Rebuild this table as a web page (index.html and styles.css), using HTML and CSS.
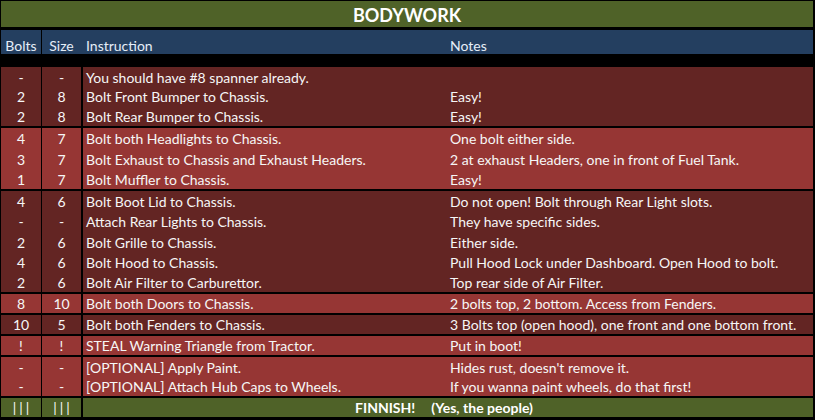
FILE: index.html
```html
<!DOCTYPE html>
<html>
<head>
<meta charset="utf-8">
<link rel="stylesheet" href="styles.css">
</head>
<body>
<div class="sheet">
  <div class="title">BODYWORK</div>
  <div class="head">
    <div class="c-bolts">Bolts</div>
    <div class="c-size">Size</div>
    <div class="c-instr">Instruction</div>
    <div class="c-notes">Notes</div>
  </div>
  <div class="spacer"></div>

  <div class="grp dark g1">
    <div class="row"><div class="c-bolts">-</div><div class="c-size">-</div><div class="c-instr">You should have #8 spanner already.</div><div class="c-notes"></div></div>
    <div class="row"><div class="c-bolts">2</div><div class="c-size">8</div><div class="c-instr">Bolt Front Bumper to Chassis.</div><div class="c-notes">Easy!</div></div>
    <div class="row"><div class="c-bolts">2</div><div class="c-size">8</div><div class="c-instr">Bolt Rear Bumper to Chassis.</div><div class="c-notes">Easy!</div></div>
  </div>

  <div class="grp light g2">
    <div class="row"><div class="c-bolts">4</div><div class="c-size">7</div><div class="c-instr">Bolt both Headlights to Chassis.</div><div class="c-notes">One bolt either side.</div></div>
    <div class="row"><div class="c-bolts">3</div><div class="c-size">7</div><div class="c-instr">Bolt Exhaust to Chassis and Exhaust Headers.</div><div class="c-notes">2 at exhaust Headers, one in front of Fuel Tank.</div></div>
    <div class="row"><div class="c-bolts">1</div><div class="c-size">7</div><div class="c-instr">Bolt Muffler to Chassis.</div><div class="c-notes">Easy!</div></div>
  </div>

  <div class="grp dark g3">
    <div class="row"><div class="c-bolts">4</div><div class="c-size">6</div><div class="c-instr">Bolt Boot Lid to Chassis.</div><div class="c-notes">Do not open! Bolt through Rear Light slots.</div></div>
    <div class="row"><div class="c-bolts">-</div><div class="c-size">-</div><div class="c-instr">Attach Rear Lights to Chassis.</div><div class="c-notes">They have specific sides.</div></div>
    <div class="row"><div class="c-bolts">2</div><div class="c-size">6</div><div class="c-instr">Bolt Grille to Chassis.</div><div class="c-notes">Either side.</div></div>
    <div class="row"><div class="c-bolts">4</div><div class="c-size">6</div><div class="c-instr">Bolt Hood to Chassis.</div><div class="c-notes">Pull Hood Lock under Dashboard. Open Hood to bolt.</div></div>
    <div class="row"><div class="c-bolts">2</div><div class="c-size">6</div><div class="c-instr">Bolt Air Filter to Carburettor.</div><div class="c-notes">Top rear side of Air Filter.</div></div>
  </div>

  <div class="grp light g1row">
    <div class="row"><div class="c-bolts">8</div><div class="c-size">10</div><div class="c-instr">Bolt both Doors to Chassis.</div><div class="c-notes">2 bolts top, 2 bottom. Access from Fenders.</div></div>
  </div>

  <div class="grp dark g1row">
    <div class="row"><div class="c-bolts">10</div><div class="c-size">5</div><div class="c-instr">Bolt both Fenders to Chassis.</div><div class="c-notes">3 Bolts top (open hood), one front and one bottom front.</div></div>
  </div>

  <div class="grp light g1row">
    <div class="row"><div class="c-bolts">!</div><div class="c-size">!</div><div class="c-instr">STEAL Warning Triangle from Tractor.</div><div class="c-notes">Put in boot!</div></div>
  </div>

  <div class="grp light g2row">
    <div class="row"><div class="c-bolts">-</div><div class="c-size">-</div><div class="c-instr">[OPTIONAL] Apply Paint.</div><div class="c-notes">Hides rust, doesn't remove it.</div></div>
    <div class="row"><div class="c-bolts">-</div><div class="c-size">-</div><div class="c-instr">[OPTIONAL] Attach Hub Caps to Wheels.</div><div class="c-notes">If you wanna paint wheels, do that first!</div></div>
  </div>

  <div class="grp green g1row">
    <div class="row foot"><div class="c-bolts pipes">|||</div><div class="c-size pipes">|||</div><div class="c-merged"><span>FINNISH!</span><span class="sub">(Yes, the people)</span></div></div>
  </div>
</div>
</body>
</html>
```
FILE: styles.css
```css
html, body {
  margin: 0;
  padding: 0;
  background: #000;
}

.sheet {
  width: 815px;
  height: 420px;
  box-sizing: border-box;
  padding: 1px 2px 2px 1px;
  background: #000;
  font-family: Lato, "Liberation Sans", sans-serif;
  font-size: 14px;
  color: #f6f6f6;
  display: flex;
  flex-direction: column;
}

.title {
  height: 26px;
  background: #4f6228;
  color: #fff;
  font-weight: bold;
  font-size: 18px;
  display: flex;
  align-items: center;
  justify-content: center;
  padding-top: 1px;
  box-sizing: border-box;
  margin-bottom: 3px;
}

.head {
  height: 24px;
  background: #243f60;
  display: grid;
  grid-template-columns: 41px 41px 364px 1fr;
  align-items: end;
  color: #e6eef8;
}

.head > div {
  line-height: 17px;
}

.head .c-bolts {
  height: 100%;
  display: flex;
  align-items: flex-end;
  justify-content: center;
  box-sizing: border-box;
  border-right: 1px solid #000;
}

.head .c-size {
  text-align: center;
  padding-right: 2px;
}

.spacer {
  height: 13px;
}

.grp {
  display: flex;
  flex-direction: column;
  margin-bottom: 2px;
}

.grp:last-child {
  margin-bottom: 0;
}

.g1 { height: 59px; }
.g2 { height: 61px; }
.g3 { height: 101px; }
.g1row { height: 19px; }
.g2row { height: 39px; }

.row {
  flex: 1;
  display: grid;
  grid-template-columns: 41px 41px 364px 1fr;
}

.row > div {
  display: flex;
  align-items: flex-end;
  box-sizing: border-box;
  white-space: nowrap;
  line-height: 17px;
  padding-bottom: 1px;
}

.dark { background: #632523; }
.light { background: #963634; }
.green { background: #4f6228; }

.row .c-bolts {
  justify-content: center;
  border-right: 1px solid #000;
}

.row .c-size {
  justify-content: center;
  border-right: 2px solid #000;
}

.c-instr,
.c-notes {
  padding-left: 3px;
}

.head .c-instr,
.head .c-notes {
  padding-left: 3px;
}

.foot {
  grid-template-columns: 41px 41px 1fr;
}

.row .c-merged {
  justify-content: center;
  font-weight: bold;
  font-size: 14px;
  color: #fff;
  gap: 16px;
  padding-right: 8px;
}

.pipes {
  letter-spacing: 3px;
  text-indent: 3px;
}
```
